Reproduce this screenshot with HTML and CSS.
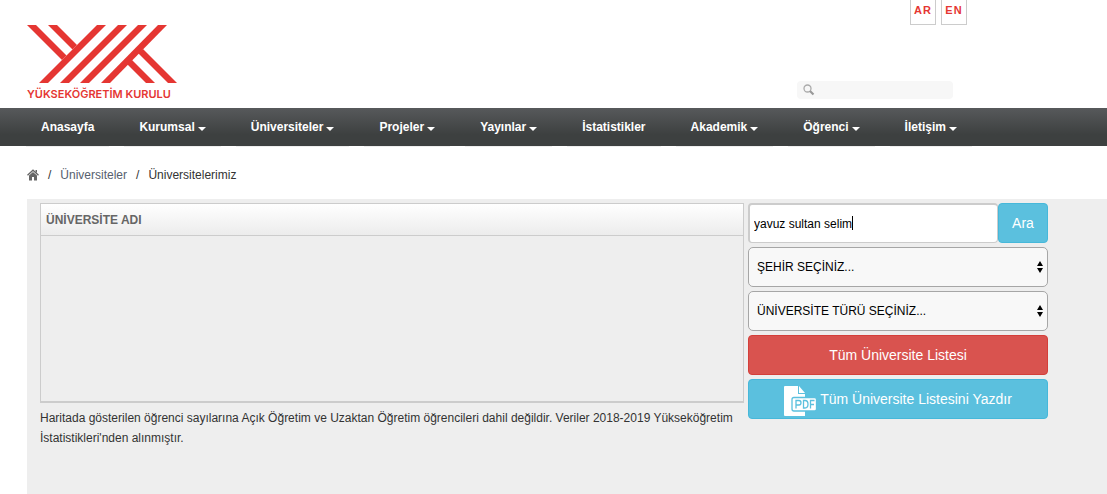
FILE: index.html
```html
<!DOCTYPE html>
<html lang="tr">
<head>
    <meta charset="UTF-8">
    <meta name="viewport" content="width=device-width, initial-scale=1.0">
    <title>Üniversitelerimiz</title>
    <link rel="stylesheet" href="styles.css">
</head>
<body>
    <header class="header">
        <a href="#" class="logo">
            <svg class="logo-mark" viewBox="0 0 150 58" width="150" height="58" aria-hidden="true">
                <path d="M0 0H9L39.500 30.500L35 35Z"/>
                <path d="M21 0H30L50 20L45.500 24.500Z"/>
                <path d="M70 0H79L21 58H12Z"/>
                <path d="M91 0H100L42 58H33Z"/>
                <path d="M111 0H120L62 58H53Z"/>
                <path d="M131 0H140L83 58H74Z"/>
                <path d="M116 24L150 58H141L111 28Z"/>
                <path d="M105 35L128 58H119L100 39Z"/>
            </svg>
            <span class="logo-text">YÜKSEKÖĞRETİM KURULU</span>
        </a>
        <div class="header-right">
            <div class="langs">
                <a href="#">AR</a>
                <a href="#">EN</a>
            </div>
            <form class="site-search">
                <svg viewBox="0 0 12 12" width="12" height="12" aria-hidden="true">
                    <circle cx="4.500" cy="4.500" r="3.500" fill="none" stroke="#aaa" stroke-width="1.300"/>
                    <path d="M7 7L10.500 10.500" stroke="#999" stroke-width="2.200"/>
                </svg>
                <input type="search" aria-label="Sitede ara">
            </form>
        </div>
    </header>

    <nav class="menu">
        <a href="#">Anasayfa</a>
        <a href="#" class="has-sub">Kurumsal</a>
        <a href="#" class="has-sub">Üniversiteler</a>
        <a href="#" class="has-sub">Projeler</a>
        <a href="#" class="has-sub">Yayınlar</a>
        <a href="#">İstatistikler</a>
        <a href="#" class="has-sub">Akademik</a>
        <a href="#" class="has-sub">Öğrenci</a>
        <a href="#" class="has-sub">İletişim</a>
    </nav>

    <div class="breadcrumb">
        <a href="#" aria-label="Anasayfa">
            <svg viewBox="0 0 12 12" width="12" height="12" aria-hidden="true">
                <path d="M0.500 6.300L6 1.200L11.500 6.300" fill="none" stroke="#666" stroke-width="1.300"/>
                <path d="M8.500 1H10V4L8.500 2.700Z" fill="#666"/>
                <path d="M2 6.500L6 2.900L10 6.500V11.500H7V8H5V11.500H2Z" fill="#666"/>
            </svg>
        </a>
        <span>/</span>
        <a href="#">Üniversiteler</a>
        <span>/</span>
        <span>Üniversitelerimiz</span>
    </div>

    <main class="content">
        <section>
            <table class="list">
                <thead>
                    <tr><th>ÜNİVERSİTE ADI</th></tr>
                </thead>
                <tbody>
                    <tr><td></td></tr>
                </tbody>
            </table>
            <p class="note">Haritada gösterilen öğrenci sayılarına Açık Öğretim ve Uzaktan Öğretim öğrencileri dahil değildir. Veriler 2018-2019 Yükseköğretim İstatistikleri'nden alınmıştır.</p>
        </section>

        <form class="filters">
            <div class="search-row">
                <input type="text" value="yavuz sultan selim" aria-label="Üniversite ara">
                <span class="caret"></span>
                <button type="button" class="btn btn-info">Ara</button>
            </div>
            <div class="select">
                <select aria-label="Şehir">
                    <option>ŞEHİR SEÇİNİZ...</option>
                </select>
                <svg viewBox="0 0 6 12" width="6" height="12" aria-hidden="true"><path d="M0 5L3 0L6 5ZM0 7H6L3 12Z"/></svg>
            </div>
            <div class="select">
                <select aria-label="Üniversite türü">
                    <option>ÜNİVERSİTE TÜRÜ SEÇİNİZ...</option>
                </select>
                <svg viewBox="0 0 6 12" width="6" height="12" aria-hidden="true"><path d="M0 5L3 0L6 5ZM0 7H6L3 12Z"/></svg>
            </div>
            <button type="button" class="btn btn-danger">Tüm Üniversite Listesi</button>
            <button type="button" class="btn btn-info">
                <svg viewBox="0 0 32 30" width="32" height="30" aria-hidden="true">
                    <path d="M1 0H14V8H21V30H1Q0 30 0 29V1Q0 0 1 0Z" fill="#fff"/>
                    <path d="M15 0L21 7H15Z" fill="#fff"/>
                    <path d="M14.500 0V7.500H21" fill="none" stroke="#5bc0de"/>
                    <rect x="8" y="11.500" width="24.500" height="13.500" rx="2" fill="#fff" stroke="#5bc0de" stroke-width="1.300"/>
                    <path d="M12 22.500V14.500H15Q17 14.500 17 16.700T15 19H12M19.500 14.500V22H21Q24 22 24 18.250T21 14.500ZM26.500 22.500V14.500H30.500M26.500 18.500H30" fill="none" stroke="#5bc0de" stroke-width="1.300"/>
                </svg>
                Tüm Üniversite Listesini Yazdır
            </button>
        </form>
    </main>
</body>
</html>
```
FILE: styles.css
```css
* {
    box-sizing: border-box;
}

body {
    margin: 0;
    min-height: 100vh;
    display: flex;
    flex-direction: column;
    font-family: "Liberation Sans", Arial, sans-serif;
    font-size: 12px;
    line-height: 20px;
    color: #333;
    background-color: #fff;
}

a {
    color: inherit;
    text-decoration: none;
}

.header {
    display: flex;
    justify-content: space-between;
    max-width: 967px;
    padding-left: 27px;
}

.logo {
    padding: 25px 0 7px;
    color: #e53632;
}

.logo-mark {
    display: block;
    fill: #e53632;
}

.logo-text {
    display: block;
    margin-top: 4px;
    font-family: Inter, sans-serif;
    font-size: 11px;
    font-weight: 600;
    line-height: 14px;
    white-space: nowrap;
}

.header-right {
    display: flex;
    flex-direction: column;
    justify-content: space-between;
    align-items: flex-end;
    padding-bottom: 9px;
}

.langs {
    display: flex;
    gap: 5px;
}

.langs a {
    width: 26px;
    height: 25px;
    border: 1px solid #ccc;
    border-top: none;
    text-align: center;
    font-size: 11px;
    font-weight: bold;
    letter-spacing: 1px;
    color: #e53632;
}

.site-search {
    display: flex;
    align-items: center;
    width: 156px;
    height: 18px;
    margin-right: 14px;
    padding-left: 6px;
    border-radius: 4px;
    background-color: #f7f7f7;
}

.site-search input {
    flex: 1;
    min-width: 0;
    border: none;
    background: none;
    font-size: 11px;
}

.menu {
    display: flex;
    gap: 15px;
    height: 38px;
    padding-left: 26px;
    background: linear-gradient(#57595b, #3d4040 70%);
}

.menu a {
    height: 39px;
    padding: 0 15px;
    border-bottom: 1px solid #eee;
    font-weight: bold;
    line-height: 38px;
    color: #fff;
    white-space: nowrap;
}

.menu .has-sub::after {
    content: "";
    display: inline-block;
    margin-left: 3px;
    border: 4px solid transparent;
    border-top-color: #fff;
    border-bottom: none;
}

.breadcrumb {
    display: flex;
    align-items: center;
    gap: 9px;
    height: 53px;
    padding: 4px 0 0 27px;
}

.breadcrumb a {
    color: #56606e;
}

.breadcrumb svg {
    display: block;
}

.content {
    flex: 1;
    display: grid;
    grid-template-columns: 1fr 300px;
    gap: 4px;
    align-items: start;
    margin-left: 27px;
    padding: 4px 59px 40px 13px;
    background-color: #eee;
}

.list {
    width: 100%;
    border: 1px solid #ccc;
    border-bottom-width: 2px;
    border-spacing: 0;
}

.list th {
    height: 32px;
    padding: 0 5px;
    border-bottom: 1px solid #ccc;
    background: linear-gradient(#fff, #ececec);
    text-align: left;
    color: #666;
}

.list td {
    height: 165px;
    padding: 0;
}

.note {
    margin: 5px 0 0;
}

.filters {
    display: flex;
    flex-direction: column;
    gap: 4px;
}

.search-row {
    position: relative;
    display: flex;
}

.search-row input {
    flex: 1;
    min-width: 0;
    height: 40px;
    padding: 0 4px;
    border: 2px solid #ccc;
    border-width: 2px 1px 1px 2px;
    border-radius: 4px;
    background-color: #fff;
    font: inherit;
    color: #000;
}

/* text cursor after the typed query */
.caret {
    position: absolute;
    left: 104px;
    top: 13px;
    width: 1px;
    height: 14px;
    background-color: #000;
}

.select {
    position: relative;
}

.select select {
    display: block;
    width: 100%;
    height: 40px;
    padding: 0 20px 0 8px;
    border: 1px solid #a6a6a6;
    border-radius: 5px;
    background-color: #f8f8f8;
    appearance: none;
    font: inherit;
    color: #000;
}

.select svg {
    position: absolute;
    right: 5px;
    top: 14px;
    pointer-events: none;
}

.btn {
    display: flex;
    align-items: center;
    justify-content: center;
    gap: 4px;
    height: 40px;
    padding: 0 12px;
    border: 1px solid;
    border-radius: 4px;
    font-family: inherit;
    font-size: 14px;
    color: #fff;
    cursor: pointer;
}

.btn svg {
    margin-top: 4px;
}

.btn-info {
    background-color: #5bc0de;
    border-color: #46b8da;
}

.btn-danger {
    background-color: #d9534f;
    border-color: #d43f3a;
}

.search-row .btn {
    width: 50px;
}
```
